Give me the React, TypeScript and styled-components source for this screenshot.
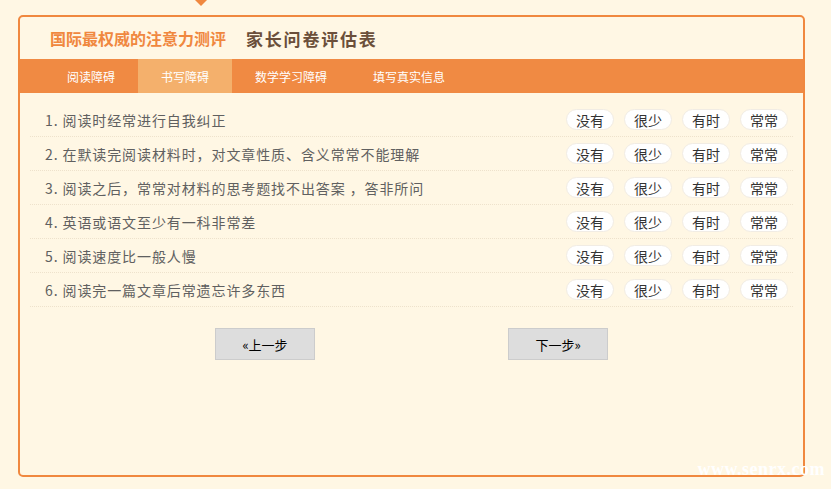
import React from "react";
import styled, { createGlobalStyle } from "styled-components";

const GlobalStyle = createGlobalStyle`
  html, body { margin: 0; padding: 0; background: #fff7e4; }
  body { font-family: "Microsoft YaHei", "Noto Sans CJK SC", "Noto Sans", sans-serif; }
  * { box-sizing: border-box; }
`;

const Page = styled.div`
  position: relative;
  width: 831px;
  height: 489px;
  background: #fff7e4;
  padding: 15px 26px 0 18px;
  overflow: hidden;
`;

const Pointer = styled.div`
  position: absolute;
  left: 195px;
  top: 0;
  width: 0;
  height: 0;
  border-left: 6px solid transparent;
  border-right: 6px solid transparent;
  border-top: 6px solid #f0883f;
`;

const Card = styled.div`
  width: 787px;
  height: 462px;
  border: 2px solid #f0883f;
  border-radius: 5px;
  display: flex;
  flex-direction: column;
`;

const Header = styled.div`
  height: 42px;
  display: flex;
  align-items: center;
  padding-left: 30px;
  gap: 20px;
`;

const Brand = styled.span`
  color: #f0883f;
  font-size: 16px;
  font-weight: bold;
`;

const Title = styled.span`
  color: #6b4f3a;
  font-size: 17px;
  font-weight: bold;
  letter-spacing: 1.8px;
`;

const TabBar = styled.div`
  height: 34px;
  background: #f08a43;
  display: flex;
  padding-left: 24px;
`;

const Tab = styled.div<{ $active?: boolean }>`
  padding: 0 23px;
  display: flex;
  align-items: center;
  color: #fff;
  font-size: 12px;
  background: ${(p) => (p.$active ? "#f4b06c" : "transparent")};
`;

const List = styled.div`
  padding: 10px 10px 0 10px;
`;

const Row = styled.div`
  height: 34px;
  display: flex;
  align-items: center;
  justify-content: space-between;
  border-bottom: 1px dotted #eee2cc;
  padding: 0 5px 0 15px;
`;

const Question = styled.span`
  color: #606060;
  font-size: 14px;
  letter-spacing: 0.9px;
`;

const Options = styled.div`
  display: flex;
  gap: 10px;
`;

const Pill = styled.span`
  width: 48px;
  height: 21px;
  border-radius: 11px;
  background: #fff;
  border: 1px solid #f1ece4;
  display: flex;
  align-items: center;
  justify-content: center;
  font-size: 14px;
  color: #333;
`;

const Nav = styled.div`
  display: flex;
  justify-content: center;
  gap: 193px;
  margin-top: 21px;
`;

const NavButton = styled.div`
  width: 100px;
  height: 32px;
  background: #dddddd;
  border: 1px solid #cccccc;
  display: flex;
  align-items: center;
  justify-content: center;
  font-size: 13px;
  color: #000;
`;

const Watermark = styled.div`
  position: absolute;
  right: 6px;
  bottom: 9px;
  font-family: "Liberation Serif", serif;
  font-weight: bold;
  font-size: 18px;
  color: #ffffff;
  letter-spacing: 0.5px;
`;

const questions = [
  "1. 阅读时经常进行自我纠正",
  "2. 在默读完阅读材料时，对文章性质、含义常常不能理解",
  "3. 阅读之后，常常对材料的思考题找不出答案 ，答非所问",
  "4. 英语或语文至少有一科非常差",
  "5. 阅读速度比一般人慢",
  "6. 阅读完一篇文章后常遗忘许多东西",
];

const options = ["没有", "很少", "有时", "常常"];
const tabs = ["阅读障碍", "书写障碍", "数学学习障碍", "填写真实信息"];

export default function App() {
  return (
    <Page>
      <GlobalStyle />
      <Pointer />
      <Card>
        <Header>
          <Brand>国际最权威的注意力测评</Brand>
          <Title>家长问卷评估表</Title>
        </Header>
        <TabBar>
          {tabs.map((t, i) => (
            <Tab key={t} $active={i === 1}>
              {t}
            </Tab>
          ))}
        </TabBar>
        <List>
          {questions.map((q) => (
            <Row key={q}>
              <Question>{q}</Question>
              <Options>
                {options.map((o) => (
                  <Pill key={o}>{o}</Pill>
                ))}
              </Options>
            </Row>
          ))}
        </List>
        <Nav>
          <NavButton>«上一步</NavButton>
          <NavButton>下一步»</NavButton>
        </Nav>
      </Card>
      <Watermark>www.senrx.com</Watermark>
    </Page>
  );
}
